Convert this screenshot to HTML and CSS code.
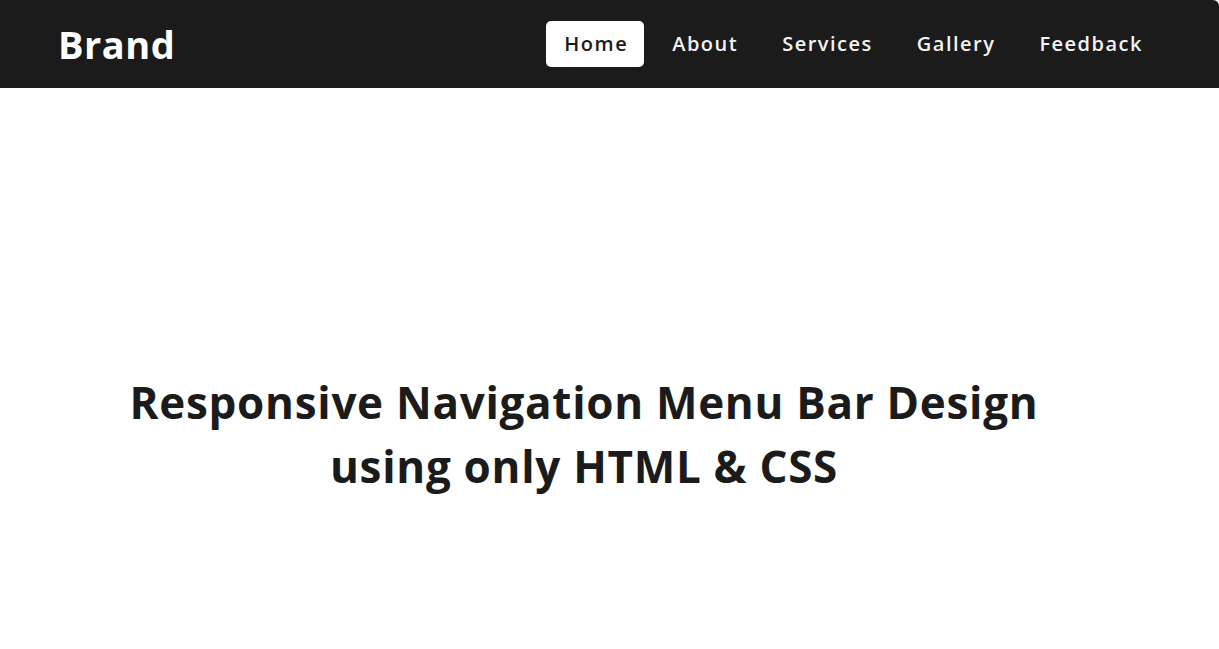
FILE: index.html
```html
<!DOCTYPE html>
<html lang="en">
<head>
<meta charset="utf-8">
<title>Responsive Navigation Menu Bar</title>
<link rel="stylesheet" href="styles.css">
</head>
<body>
  <nav class="navbar">
    <div class="brand">Brand</div>
    <ul class="menu">
      <li><a class="link active" href="#">Home</a></li>
      <li><a class="link" href="#">About</a></li>
      <li><a class="link" href="#">Services</a></li>
      <li><a class="link" href="#">Gallery</a></li>
      <li><a class="link" href="#">Feedback</a></li>
    </ul>
  </nav>
  <main class="hero">
    <h1 class="title">Responsive Navigation Menu Bar Design<br>using only HTML &amp; CSS</h1>
  </main>
</body>
</html>
```
FILE: styles.css
```css
* { box-sizing: border-box; }
body {
  margin: 0;
  background: #ffffff;
  font-family: "Open Sans", "DejaVu Sans", sans-serif;
}
.navbar {
  height: 88px;
  background: #1b1b1b;
  border-top-right-radius: 6px;
  display: flex;
  align-items: center;
  justify-content: space-between;
  padding: 0 60px 0 58px;
}
.brand {
  color: #ffffff;
  font-size: 38px;
  font-weight: 700;
  letter-spacing: 0.5px;
}
.menu {
  list-style: none;
  margin: 0;
  padding: 0;
  display: flex;
  gap: 10px;
}
.link {
  display: block;
  height: 46px;
  line-height: 46px;
  padding: 0 16px 0 18px;
  border-radius: 5px;
  color: #f2f2f2;
  text-decoration: none;
  font-size: 20px;
  font-weight: 600;
  letter-spacing: 1.5px;
}
.link.active {
  background: #ffffff;
  color: #1b1b1b;
}
.hero {
  display: flex;
  justify-content: center;
  padding: 282px 51px 0 0;
}
.title {
  margin: 0;
  text-align: center;
  color: #1b1b1b;
  font-size: 44px;
  line-height: 64px;
  font-weight: 700;
  letter-spacing: 0.7px;
}
```
